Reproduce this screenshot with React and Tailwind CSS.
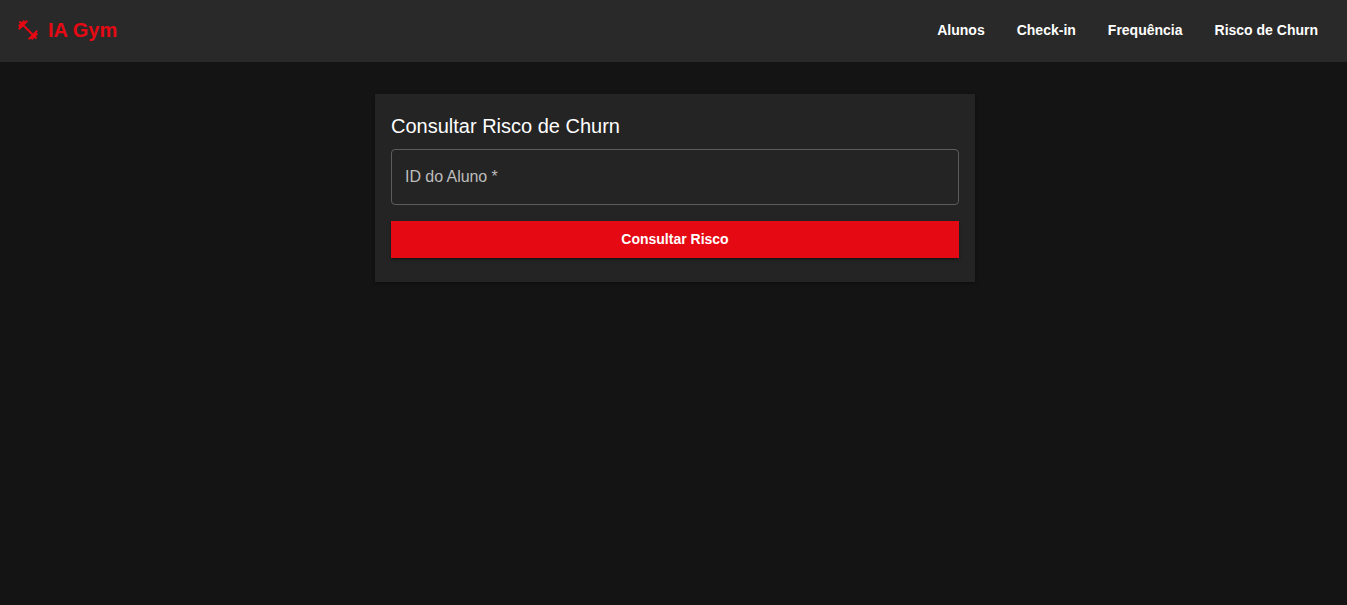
import { MdFitnessCenter } from "react-icons/md";

const links = ["Alunos", "Check-in", "Frequência", "Risco de Churn"];

export default function App() {
  return (
    <div className="min-h-screen bg-[#141414] text-white font-['Liberation_Sans',Arial,sans-serif]">
      <header className="flex h-[62px] items-center justify-between bg-[#292929] pr-[21px] pb-0.5 pl-4">
        <div className="flex items-center gap-2 text-[#e50914]">
          <MdFitnessCenter className="size-6" />
          <span className="text-xl leading-8 font-bold">IA Gym</span>
        </div>
        <nav className="flex gap-4">
          {links.map((label) => (
            <a key={label} href="#" className="px-2 text-sm leading-6 font-bold">
              {label}
            </a>
          ))}
        </nav>
      </header>
      <main className="flex justify-center pt-8 pl-[3px]">
        <form className="flex h-[188px] w-[600px] flex-col bg-[#242424] px-4 pt-4 shadow-[0_1px_3px_rgba(0,0,0,0.35)]">
          <h1 className="mb-[7px] text-xl leading-8">Consultar Risco de Churn</h1>
          <div className="flex h-14 items-center rounded border border-[#5c5c5c] px-[13px] text-base text-[#bdbdbd]">
            <label className="tracking-[-0.05px]">ID do Aluno *</label>
          </div>
          <button
            type="button"
            className="mt-4 h-[37px] bg-[#e50914] pb-0.5 text-sm font-bold shadow-[0_3px_1px_-2px_rgba(0,0,0,0.2),0_2px_2px_0_rgba(0,0,0,0.14),0_1px_5px_0_rgba(0,0,0,0.12)]"
          >
            Consultar Risco
          </button>
        </form>
      </main>
    </div>
  );
}
